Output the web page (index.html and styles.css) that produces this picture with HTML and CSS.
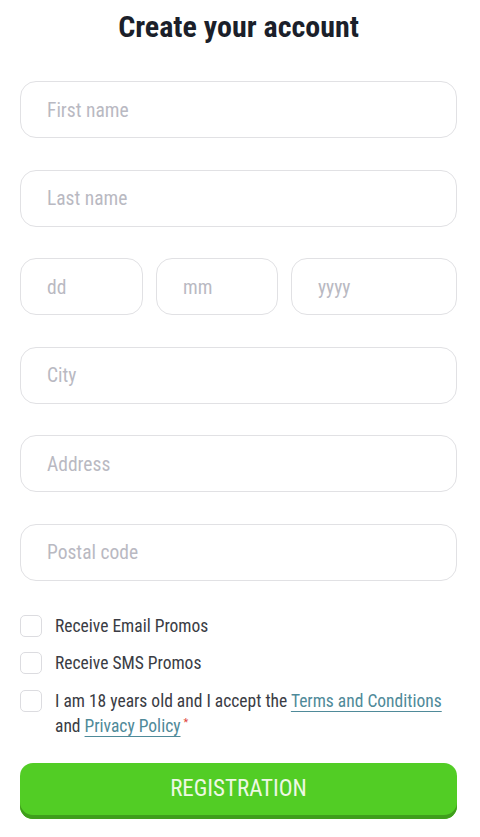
FILE: index.html
```html
<!DOCTYPE html>
<html lang="en">
<head>
<meta charset="utf-8">
<title>Create your account</title>
<link rel="stylesheet" href="styles.css">
</head>
<body>
<main class="form">
  <h1 class="title">Create your account</h1>
  <div class="field"><span class="ph">First name</span></div>
  <div class="field"><span class="ph">Last name</span></div>
  <div class="row">
    <div class="field dd"><span class="ph">dd</span></div>
    <div class="field mm"><span class="ph">mm</span></div>
    <div class="field yy"><span class="ph">yyyy</span></div>
  </div>
  <div class="field"><span class="ph">City</span></div>
  <div class="field"><span class="ph">Address</span></div>
  <div class="field"><span class="ph">Postal code</span></div>
  <div class="checks">
    <label class="check"><span class="box"></span><span class="lbl">Receive Email Promos</span></label>
    <label class="check"><span class="box"></span><span class="lbl">Receive SMS Promos</span></label>
    <label class="check"><span class="box"></span><span class="lbl">I am 18 years old and I accept the <a class="link">Terms and Conditions</a> and <a class="link">Privacy Policy</a><sup class="req">*</sup></span></label>
  </div>
  <button class="btn">REGISTRATION</button>
</main>
</body>
</html>
```
FILE: styles.css
```css
html, body { margin: 0; padding: 0; background: #fff; }
body { font-family: Roboto, "Liberation Sans", sans-serif; font-stretch: 80%; }
.form { padding: 0 23px 0 20px; display: flex; flex-direction: column; }
.title { margin: 9px 0 0; text-align: center; font-size: 30px; font-weight: 700; color: #1b1f2a; line-height: 36px; height: 36px; }
.field { height: 55px; border: 1px solid #e1e1e4; border-radius: 16px; display: flex; align-items: center; padding-left: 26px; margin-top: 31.6px; }
.form > .field:first-of-type { margin-top: 36px; }
.ph { font-size: 19.5px; color: #b9b9c2; padding-top: 1px; }
.row { display: flex; gap: 13px; margin-top: 31.6px; }
.row .field { margin-top: 0; }
.dd { width: 95px; }
.mm { width: 94px; }
.yy { flex: 1; }
.checks { margin-top: 33px; display: flex; flex-direction: column; gap: 12.5px; }
.check { display: flex; align-items: flex-start; gap: 13px; font-size: 17.5px; color: #3a3c44; line-height: 25px; }
.box { width: 20px; height: 20px; border: 1px solid #dcdce0; border-radius: 5px; flex: none; margin-top: 1px; }
.link { color: #4f8a99; text-decoration: underline; text-decoration-color: #4f8a99; text-underline-offset: 4px; }
.req { color: #e0463d; font-size: 11px; vertical-align: top; position: relative; top: -4px; margin-left: 3px; }
.btn { margin-top: 24px; height: 56px; border: none; border-radius: 13px; background: #52cd25; box-shadow: inset 0 -4px 0 #3f9e1c; color: #eef8e4; font-family: inherit; font-stretch: 80%; font-size: 23px; font-weight: 400; padding: 0 0 4px; }
```
